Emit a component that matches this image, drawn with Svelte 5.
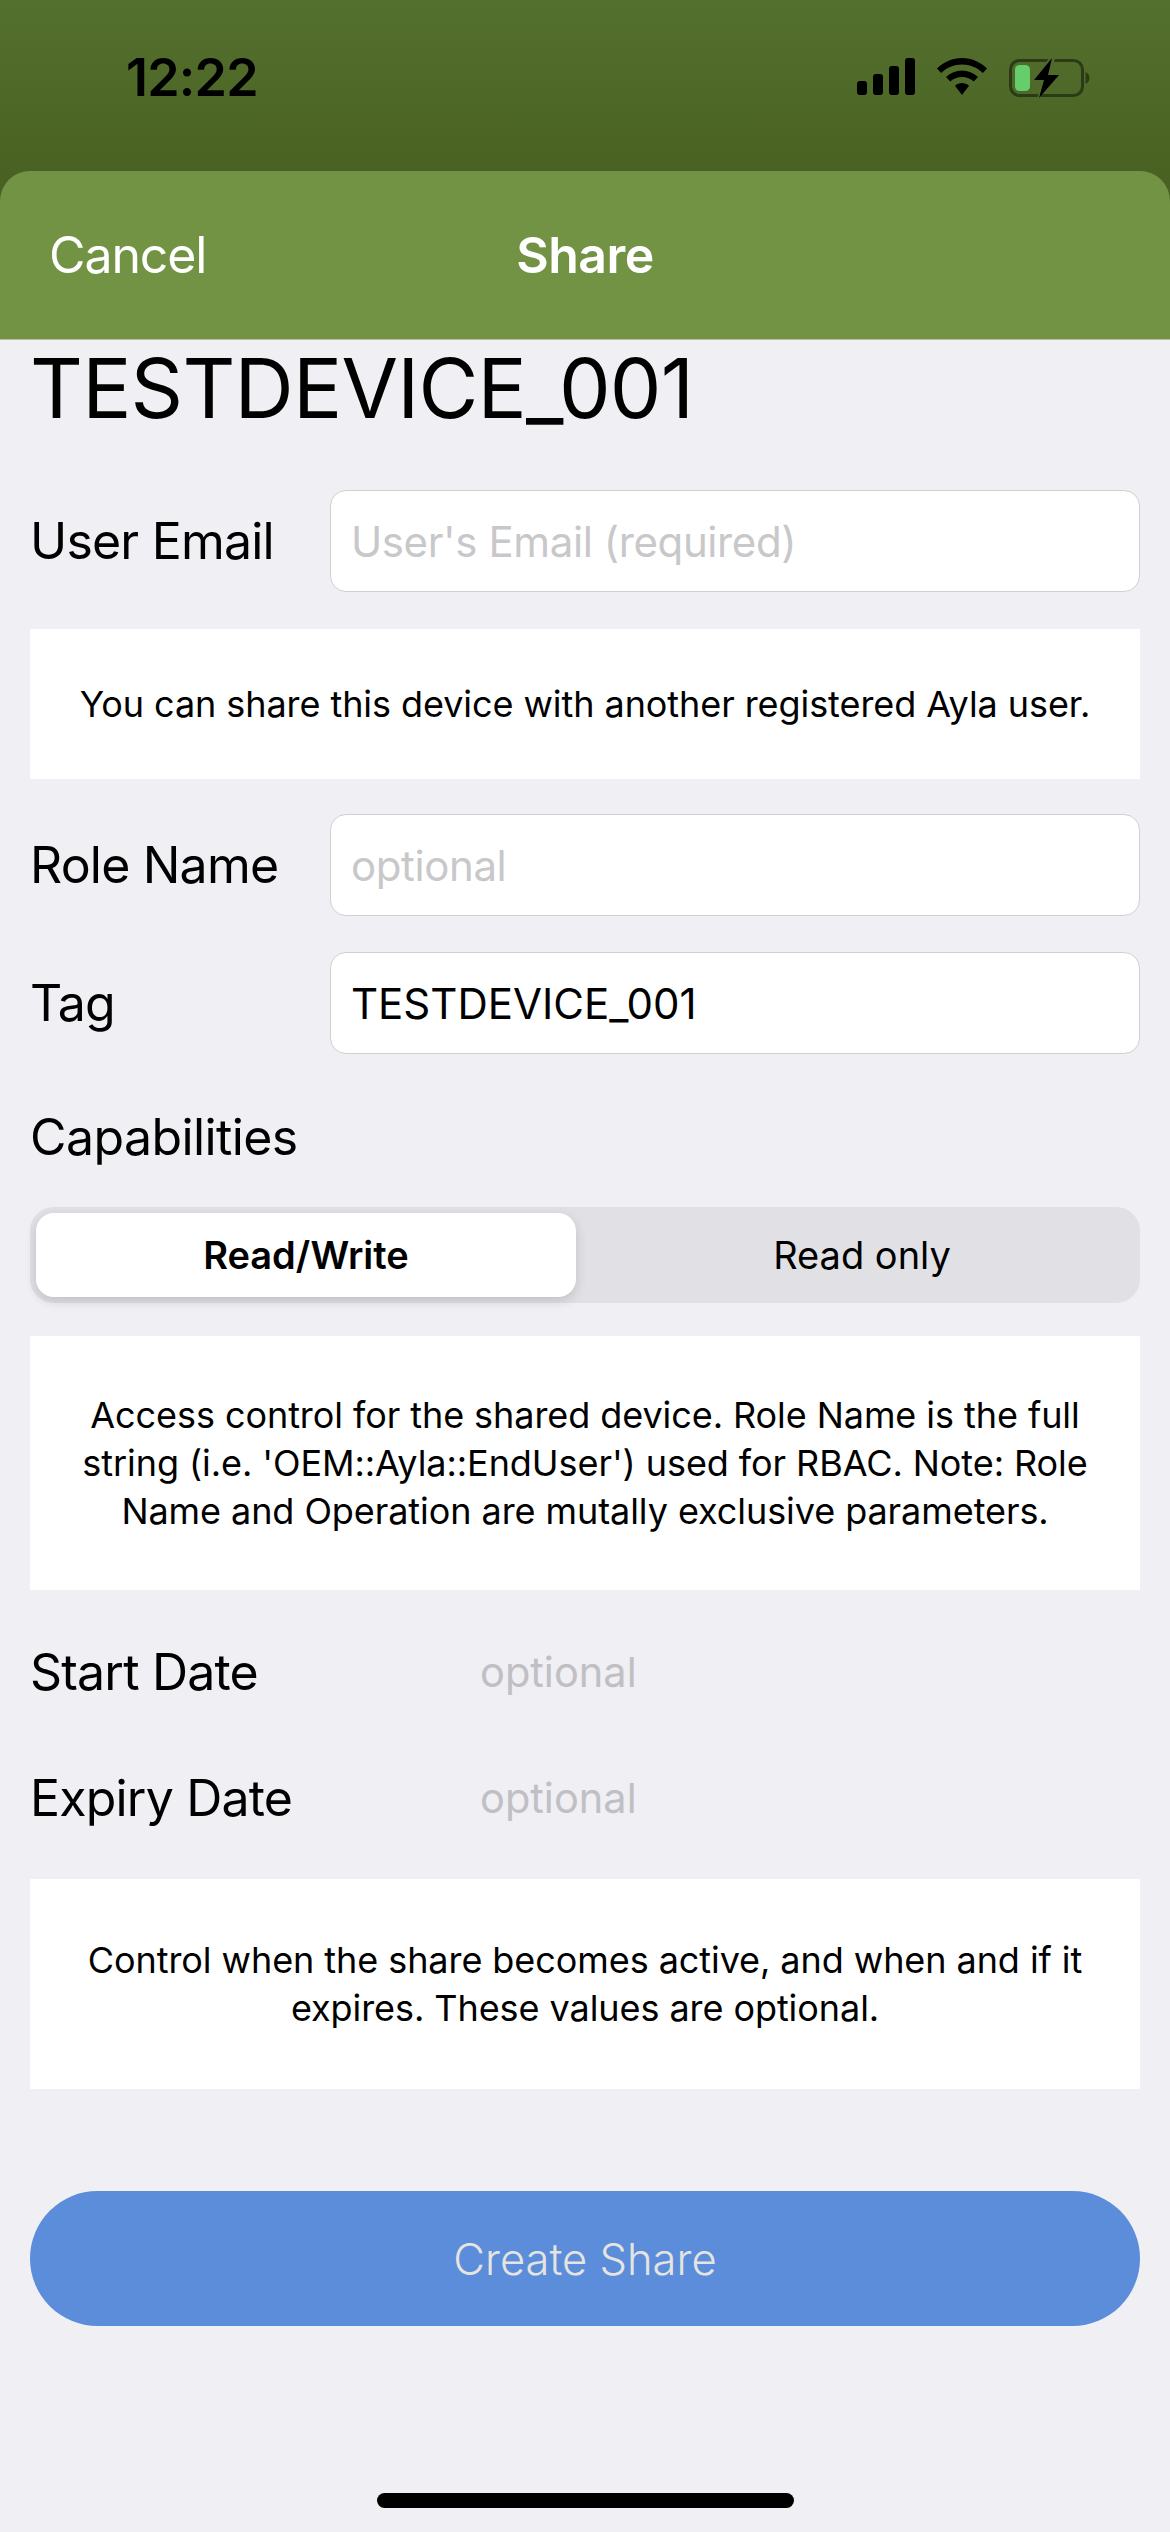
<script>
	let email = ''
	let roleName = ''
	let tag = 'TESTDEVICE_001'
	let capability = 'rw'
</script>

<main class="screen">
	<div class="top">
		<div class="status">
			<span class="time">12:22</span>
			<div class="status-icons">
				<svg width="58" height="37" viewBox="0 0 58 37">
					<rect x="0" y="23" width="10" height="14" rx="3" />
					<rect x="16" y="16" width="10" height="21" rx="3" />
					<rect x="32" y="8" width="10" height="29" rx="3" />
					<rect x="48" y="0" width="10" height="37" rx="3" />
				</svg>
				<svg width="50" height="37" viewBox="0 0 50 37">
					<path d="M25 0C15.500 0 7 3.700 0 10.500L4.200 15C10 9.500 17 6.600 25 6.600S40 9.500 45.800 15L50 10.500C43 3.700 34.500 0 25 0Z" />
					<path d="M25 12.500C19 12.500 13.500 14.800 9 19L13.300 23.500C16.500 20.700 20.500 19 25 19S33.500 20.700 36.700 23.500L41 19C36.500 14.800 31 12.500 25 12.500Z" />
					<path d="M25 25C22.500 25 20 26 18 27.700L25 37L32 27.700C30 26 27.500 25 25 25Z" />
				</svg>
				<svg width="82" height="40" viewBox="0 0 82 40">
					<rect x="1.500" y="2.500" width="72" height="35" rx="9" fill="none" stroke="#2c3b17" stroke-width="3" />
					<path d="M76.500 14C79 15 80.500 17.500 80.500 20S79 25 76.500 26Z" fill="#2c3b17" />
					<rect x="6" y="7" width="15" height="26" rx="4.500" fill="#65cd6c" />
					<path d="M42 -2L22 23H32L28 42L52 15H41L47 -2Z" fill="#4f6b2b" />
					<path d="M43 0L25 22H35L30 40L50 17H39Z" fill="#000" />
				</svg>
			</div>
		</div>

		<header class="navbar">
			<span class="cancel">Cancel</span>
			<span class="nav-title">Share</span>
		</header>
	</div>

	<div class="content">
		<h1>TESTDEVICE_001</h1>

		<div class="field first">
			<label for="email">User Email</label>
			<input id="email" bind:value={email} placeholder="User's Email (required)" />
		</div>

		<div class="note one">You can share this device with another registered Ayla user.</div>

		<div class="field">
			<label for="role">Role Name</label>
			<input id="role" bind:value={roleName} placeholder="optional" />
		</div>

		<div class="field tag">
			<label for="tag">Tag</label>
			<input id="tag" bind:value={tag} />
		</div>

		<div class="cap-label">Capabilities</div>

		<div class="segment">
			<button class:active={capability === 'rw'} on:click={() => (capability = 'rw')}>Read/Write</button>
			<button class:active={capability === 'r'} on:click={() => (capability = 'r')}>Read only</button>
		</div>

		<div class="note three">
			Access control for the shared device. Role Name is the full<br />
			string (i.e. 'OEM::Ayla::EndUser') used for RBAC. Note: Role<br />
			Name and Operation are mutally exclusive parameters.
		</div>

		<div class="date start">
			<span class="date-label">Start Date</span>
			<span class="date-value">optional</span>
		</div>
		<div class="date expiry">
			<span class="date-label">Expiry Date</span>
			<span class="date-value">optional</span>
		</div>

		<div class="note two">
			Control when the share becomes active, and when and if it<br />
			expires. These values are optional.
		</div>

		<button class="create">Create Share</button>
	</div>

	<div class="home-bar"></div>
</main>

<style>
	:global(body) {
		margin: 0;
		background: #efeff4;
	}
	.screen {
		width: 1170px;
		height: 2532px;
		display: flex;
		flex-direction: column;
		position: relative;
		overflow: hidden;
		font-family: Inter, "Liberation Sans", sans-serif;
		color: #000;
		background: #efeff4;
	}
	.top {
		background: linear-gradient(#54702e, #486021 195px);
	}
	.status {
		height: 171px;
		box-sizing: border-box;
		display: flex;
		justify-content: space-between;
		align-items: flex-start;
		padding: 50px 79px 0 126px;
	}
	.time {
		font-size: 52px;
		line-height: 56px;
		font-weight: 600;
		letter-spacing: -0.8px;
	}
	.status-icons {
		display: flex;
		align-items: flex-start;
		gap: 22px;
		padding-top: 8px;
		fill: #000;
	}
	.navbar {
		height: 169px;
		box-sizing: border-box;
		background: #729343;
		border-radius: 30px 30px 0 0;
		border-bottom: 1px solid #b5c0a8;
		display: flex;
		align-items: center;
		justify-content: center;
		position: relative;
		color: #fff;
		font-size: 50px;
	}
	.cancel {
		position: absolute;
		left: 49px;
		letter-spacing: -1.1px;
	}
	.nav-title {
		font-weight: 600;
		letter-spacing: -0.5px;
	}
	.content {
		display: flex;
		flex-direction: column;
		padding: 0 30px;
		margin-top: -1px;
	}
	h1 {
		margin: 0;
		font-size: 82px;
		line-height: 100px;
		font-weight: 400;
		letter-spacing: -0.8px;
	}
	.field {
		display: flex;
		align-items: center;
		height: 102px;
		margin-top: 35px;
	}
	.field.first {
		margin-top: 51px;
	}
	.field.tag {
		margin-top: 36px;
	}
	.field label {
		width: 300px;
		flex: none;
		font-size: 50px;
		letter-spacing: -0.8px;
	}
	.field input {
		flex: 1;
		min-width: 0;
		height: 102px;
		box-sizing: border-box;
		border: 1.5px solid #d0d0d2;
		border-radius: 16px;
		background: #fff;
		padding: 0 20px;
		font: inherit;
		font-size: 42px;
		color: #000;
		outline: none;
	}
	.field input::placeholder {
		color: #c8c8ca;
		opacity: 1;
		letter-spacing: -0.4px;
	}
	.note {
		background: #fff;
		box-sizing: border-box;
		display: flex;
		align-items: center;
		justify-content: center;
		text-align: center;
		font-size: 36px;
		line-height: 48px;
		letter-spacing: -0.07px;
	}
	.note.one {
		height: 150px;
		margin-top: 37px;
	}
	.cap-label {
		font-size: 50px;
		line-height: 60px;
		letter-spacing: -0.6px;
		margin-top: 53px;
	}
	.segment {
		height: 96px;
		margin-top: 40px;
		display: grid;
		grid-template-columns: 540px 1fr;
		box-sizing: border-box;
		padding: 6px;
		background: #e0e0e5;
		border-radius: 24px;
	}
	.segment button {
		border: 0;
		background: transparent;
		font: inherit;
		font-size: 38px;
		color: #000;
		border-radius: 18px;
		padding: 0 0 0 14px;
	}
	.segment button.active {
		background: #fff;
		font-weight: 600;
		padding: 0;
		box-shadow: 0 4px 12px rgba(0, 0, 0, 0.14);
	}
	.note.three {
		height: 254px;
		margin-top: 33px;
	}
	.date {
		display: flex;
		align-items: center;
		height: 60px;
	}
	.date.start {
		margin-top: 52px;
	}
	.date.expiry {
		margin-top: 66px;
	}
	.date-label {
		width: 450px;
		flex: none;
		font-size: 50px;
		letter-spacing: -0.8px;
	}
	.date-value {
		font-size: 41.5px;
		color: #c0c0c4;
	}
	.note.two {
		height: 210px;
		margin-top: 51px;
	}
	.create {
		height: 135px;
		margin-top: 102px;
		border: 0;
		border-radius: 68px;
		background: #5b8ddb;
		color: #e6e4e0;
		font: inherit;
		font-size: 43.5px;
		font-weight: 300;
	}
	.home-bar {
		position: absolute;
		left: 377px;
		bottom: 24px;
		width: 417px;
		height: 15px;
		border-radius: 8px;
		background: #000;
	}
</style>
